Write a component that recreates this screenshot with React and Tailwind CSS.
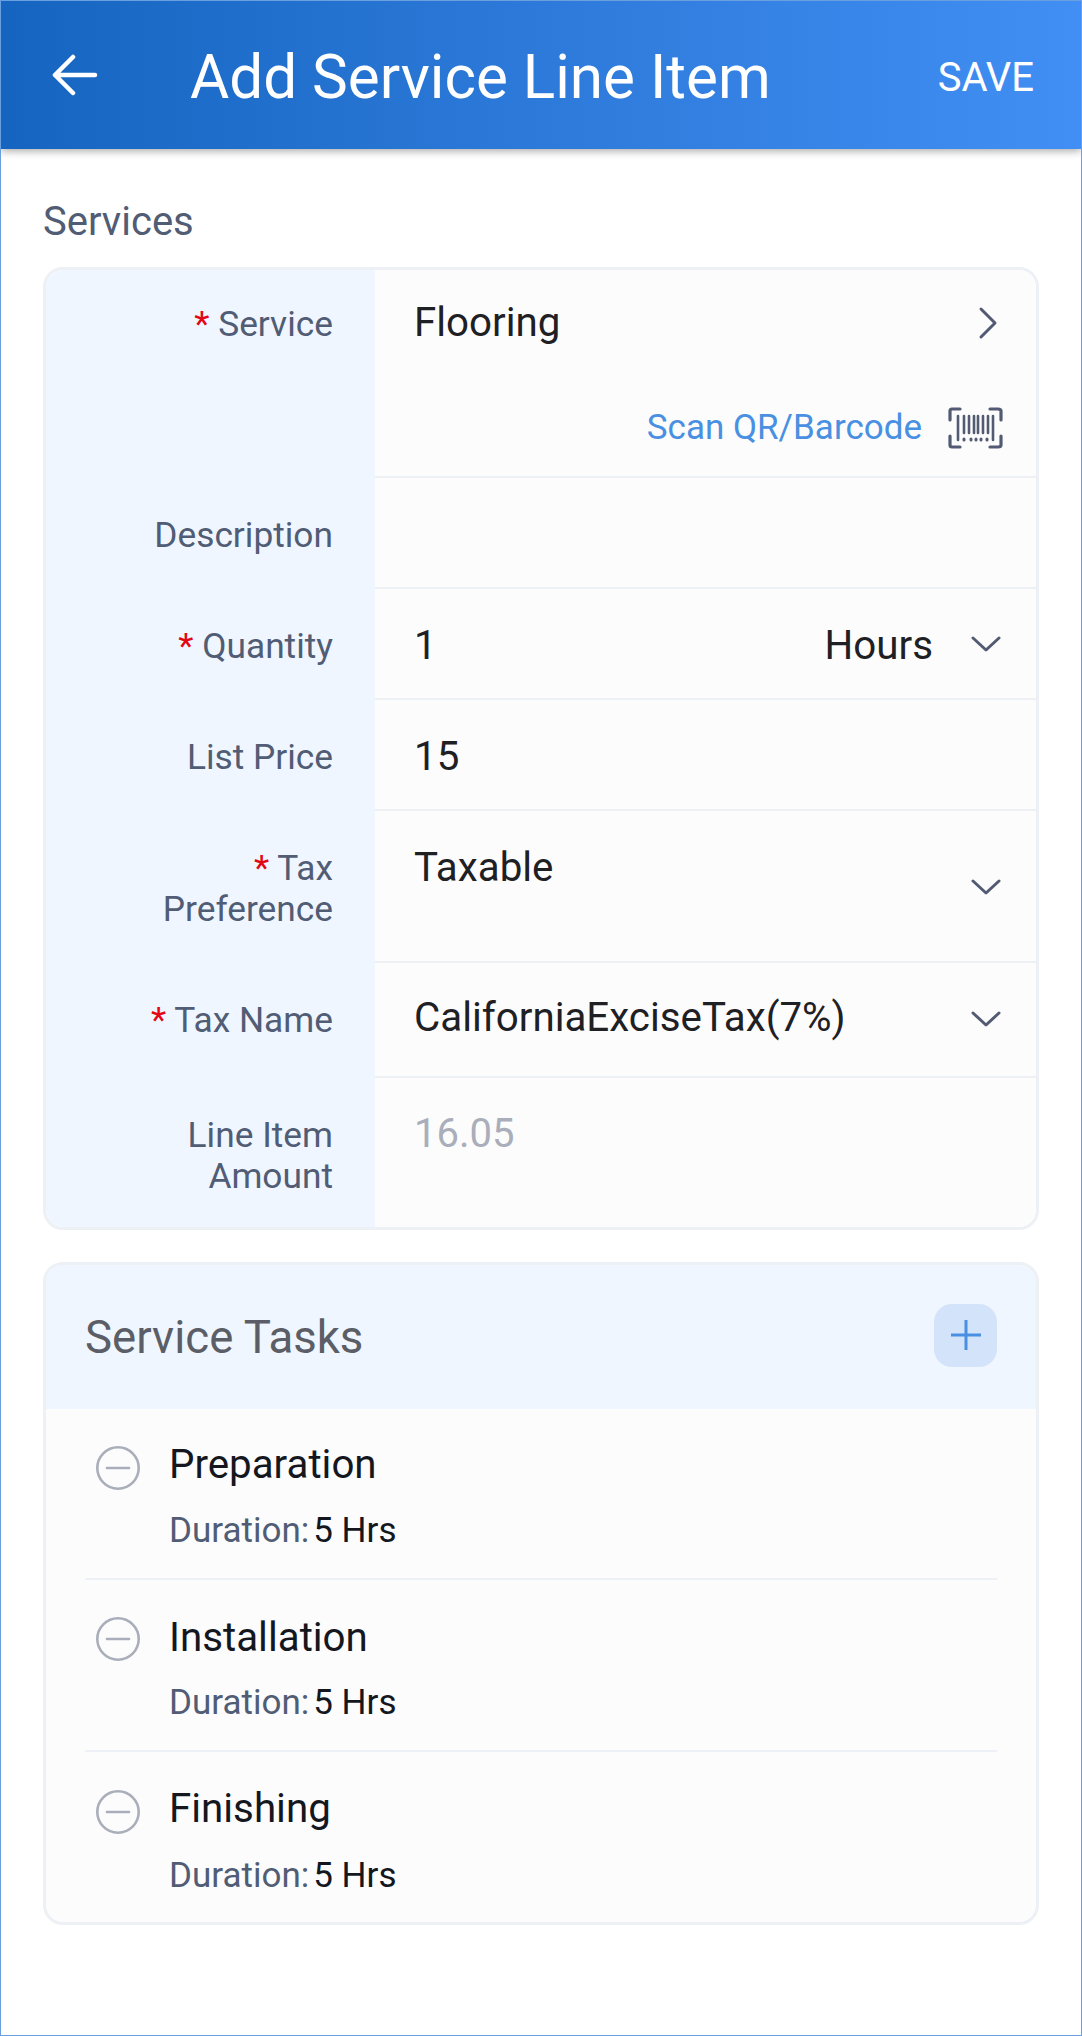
import React from "react";

const Chevron = () => (
  <svg width="30" height="18" viewBox="0 0 30 18" fill="none" stroke="#535b73" strokeWidth="3" strokeLinecap="round" strokeLinejoin="round">
    <path d="M2 3 L15 15 L28 3" />
  </svg>
);

const Barcode = () => (
  <svg width="56" height="42" viewBox="0 0 56 42" fill="none" stroke="#535b73" strokeLinecap="round" strokeLinejoin="round">
    <path d="M3 13 V4 Q3 2 5 2 H13 M43 2 H51 Q54 2 54 4 V13 M3 29 V38 Q3 40 5 40 H13 M43 40 H51 Q54 40 54 38 V29" strokeWidth="3.2" />
    <path d="M11 9 V33 M46 9 V33 M17 9 V26 M22 9 V26 M27 9 V26 M31 9 V26 M36 9 V26 M41 9 V26" strokeWidth="2.6" />
    <path d="M17 32 V33 M24 32 V33 M29 32 V33 M34 32 V33 M40 32 V33" strokeWidth="3" />
  </svg>
);

const Row = ({ label, req, h, top, border = true, children }) => (
  <div className={`flex ${h}`}>
    <div className={`w-[329px] shrink-0 bg-[#eff6ff] pl-[60px] pr-[42px] text-right text-[35.3px] leading-[41px] text-[#515c75] ${top}`}>
      {req && <span className="text-[#e30613]">* </span>}
      {label}
    </div>
    <div className={`min-w-0 flex-1 bg-[#fcfcfc] ${border ? "border-b-2 border-[#edf0f4]" : ""}`}>{children}</div>
  </div>
);

const Task = ({ name, h, iconTop, nameTop, gap, border = true }) => (
  <div className={`flex ${h} ${border ? "border-b-2 border-[#edf0f4]" : ""}`}>
    <svg className={`ml-[11px] shrink-0 ${iconTop}`} width="44" height="44" viewBox="0 0 44 44" fill="none" stroke="#a9aeba" strokeWidth="2.6">
      <circle cx="22" cy="22" r="20.7" />
      <path d="M11 22 H33" strokeLinecap="round" />
    </svg>
    <div className="ml-[29px]">
      <div className={`text-[40.3px] leading-[46px] text-[#15171f] ${nameTop}`}>{name}</div>
      <div className={`flex text-[35px] leading-[40px] ${gap}`}>
        <span className="text-[#515c75]">Duration:</span>
        <span className="ml-[4px] text-[#15171f]">5 Hrs</span>
      </div>
    </div>
  </div>
);

export default function App() {
  return (
    <div className="h-[2036px] w-[1082px] overflow-hidden border border-[#6a9fe0] bg-white font-['Roboto',sans-serif]">
      <header className="flex h-[148px] items-center bg-gradient-to-r from-[#1565c0] to-[#418ff4] shadow-[0_2px_8px_rgba(0,0,0,0.35)]">
        <svg className="ml-[51px] shrink-0" width="46" height="42" viewBox="0 0 46 42" fill="none" stroke="white" strokeWidth="4.5" strokeLinecap="round" strokeLinejoin="round">
          <path d="M21 3 L3 21 L21 39 M3 21 H43" />
        </svg>
        <h1 className="ml-[92px] pt-[5px] text-[60.2px] font-normal leading-[68px] text-white">Add Service Line Item</h1>
        <span className="ml-auto mr-[47px] pt-[5px] text-[40px] text-white">SAVE</span>
      </header>

      <div className="px-[42px]">
        <div className="mt-[51px] text-[40px] leading-[44px] text-[#515c75]">Services</div>

        <section className="mt-[23px] overflow-hidden rounded-[20px] border-[3px] border-[#edf0f4]">
          <Row label="Service" req h="h-[208px]" top="pt-[34px]">
            <div className="flex items-center justify-between pl-[39px] pr-[38px] pt-[30px]">
              <span className="text-[40.3px] leading-[46px] text-[#1f2024]">Flooring</span>
              <svg width="20" height="34" viewBox="0 0 20 34" fill="none" stroke="#535b73" strokeWidth="3" strokeLinecap="round" strokeLinejoin="round">
                <path d="M3 3 L17 17 L3 31" />
              </svg>
            </div>
            <div className="mt-[60px] flex items-center justify-end pr-[33px]">
              <span className="text-[35px] leading-[44px] text-[#4a90e2]">Scan QR/Barcode</span>
              <span className="ml-[25px] flex"><Barcode /></span>
            </div>
          </Row>
          <Row label="Description" h="h-[111px]" top="pt-[37px]" />
          <Row label="Quantity" req h="h-[111px]" top="pt-[37px]">
            <div className="flex h-full items-center pl-[39px] pr-[35px] text-[40.3px] text-[#1f2024]">
              <span className="pt-[5px]">1</span>
              <span className="ml-auto mr-[38px] pt-[5px]">Hours</span>
              <Chevron />
            </div>
          </Row>
          <Row label="List Price" h="h-[111px]" top="pt-[37px]">
            <div className="pl-[39px] pt-[34px] text-[40.3px] leading-[46px] text-[#1f2024]">15</div>
          </Row>
          <Row label="Tax Preference" req h="h-[152px]" top="pt-[37px]">
            <div className="flex h-full justify-between pl-[39px] pr-[35px]">
              <span className="pt-[34px] text-[40.3px] leading-[46px] text-[#1f2024]">Taxable</span>
              <span className="pt-[67px]"><Chevron /></span>
            </div>
          </Row>
          <Row label="Tax Name" req h="h-[115px]" top="pt-[37px]">
            <div className="flex h-full items-center justify-between pb-[2px] pl-[39px] pr-[35px] text-[40.3px] text-[#1f2024]">
              <span>CaliforniaExciseTax(7%)</span>
              <Chevron />
            </div>
          </Row>
          <Row label="Line Item Amount" h="h-[149px]" top="pt-[37px]" border={false}>
            <div className="pl-[39px] pt-[33px] text-[40px] leading-[46px] text-[#a9aeba]">16.05</div>
          </Row>
        </section>

        <section className="mt-[32px] overflow-hidden rounded-[20px] border-[3px] border-[#edf0f4] bg-[#fcfcfc]">
          <div className="flex h-[144px] items-center justify-between bg-[#eff6ff] pl-[39px] pr-[39px]">
            <span className="pt-[2px] text-[45.6px] leading-[50px] text-[#5b5e66]">Service Tasks</span>
            <div className="mb-[4px] flex h-[63px] w-[63px] items-center justify-center rounded-[18px] bg-[#d3e3f9]">
              <svg width="32" height="32" viewBox="0 0 32 32" fill="none" stroke="#4a90e2" strokeWidth="3">
                <path d="M16 1 V31 M1 16 H31" />
              </svg>
            </div>
          </div>
          <div className="mx-[39px]">
            <Task name="Preparation" h="h-[171px]" iconTop="mt-[37px]" nameTop="mt-[33px]" gap="mt-[23px]" />
            <Task name="Installation" h="h-[172px]" iconTop="mt-[37px]" nameTop="mt-[35px]" gap="mt-[22px]" />
            <Task name="Finishing" h="h-[170px]" iconTop="mt-[38px]" nameTop="mt-[34px]" gap="mt-[24px]" border={false} />
          </div>
        </section>
      </div>
    </div>
  );
}
